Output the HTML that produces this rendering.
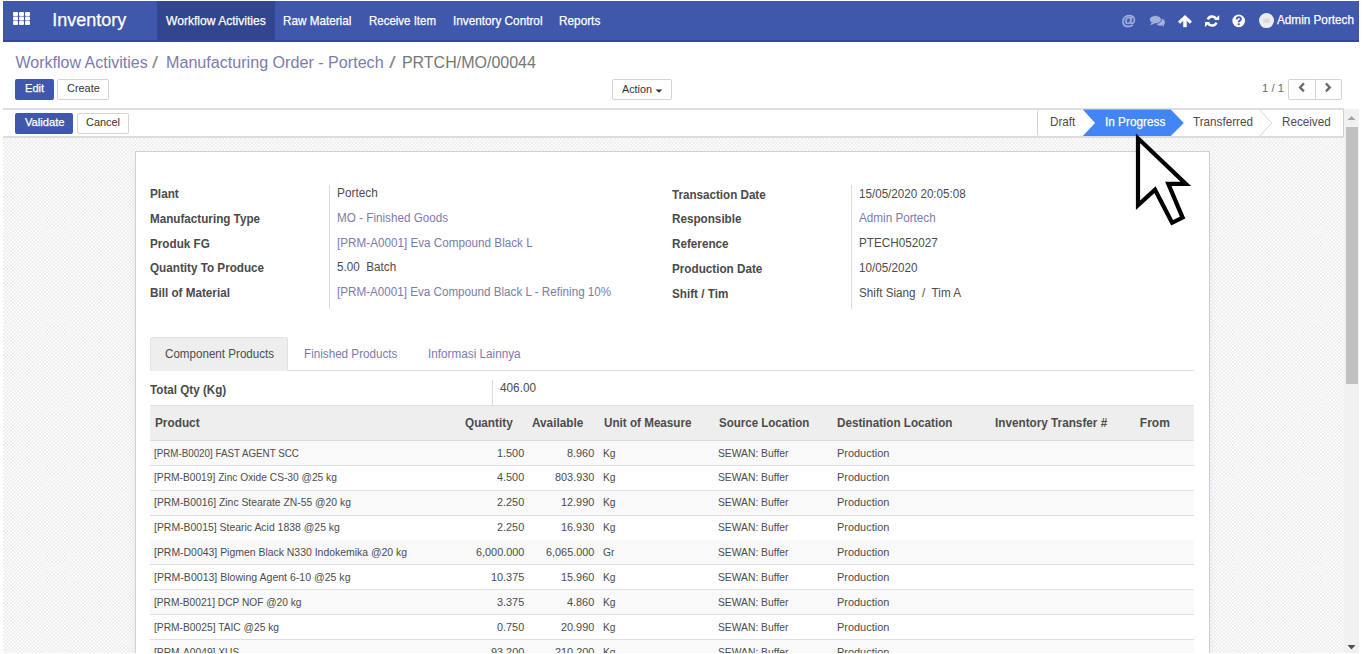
<!DOCTYPE html>
<html><head><meta charset="utf-8"><style>
html,body{margin:0;padding:0;width:1363px;height:654px;overflow:hidden;background:#fff;font-family:"Liberation Sans",sans-serif;}
.a{position:absolute;box-sizing:border-box}
.t{position:absolute;white-space:pre;line-height:1;transform-origin:0 0;font-family:"Liberation Sans",sans-serif}
</style></head><body>
<!-- navbar -->
<div class="a" style="left:3px;top:1px;width:1356.3px;height:41px;background:#3f58ac;border-bottom:2px solid #36479b"></div>
<div class="a" style="left:157px;top:1px;width:117.5px;height:39px;background:#32468f"></div>
<svg class="a" style="left:12px;top:11px" width="20" height="16" viewBox="0 0 20 16">
  <g fill="#fff">
    <rect x="1" y="1" width="5" height="4" rx="1"/><rect x="7" y="1" width="5" height="4" rx="1"/><rect x="13" y="1" width="5" height="4" rx="1"/>
    <rect x="1" y="5.5" width="5" height="4" rx="1"/><rect x="7" y="5.5" width="5" height="4" rx="1"/><rect x="13" y="5.5" width="5" height="4" rx="1"/>
    <rect x="1" y="10" width="5" height="4" rx="1"/><rect x="7" y="10" width="5" height="4" rx="1"/><rect x="13" y="10" width="5" height="4" rx="1"/>
  </g>
</svg>
<!-- right icons -->
<div class="a" style="left:1121.5px;top:13px;font-family:'Liberation Sans',sans-serif;font-weight:bold;font-size:14.5px;color:#a3afdc;line-height:14px;-webkit-text-stroke:0.45px #a3afdc">@</div>
<svg class="a" style="left:1120px;top:12px" width="160" height="18" viewBox="0 0 160 18">
  <!-- chat -->
  <g fill="#a3afdc">
    <ellipse cx="40.6" cy="10.2" rx="4.3" ry="3.5"/>
    <path d="M42.2 12.6 L43.8 15 L44 11.8Z"/>
  </g>
  <g fill="#a3afdc" stroke="#3f58ac" stroke-width="0.9">
    <ellipse cx="35.4" cy="7.6" rx="6" ry="4.1"/>
  </g>
  <path d="M31.6 10.4 L30.3 13.2 L35.2 11.3Z" fill="#a3afdc"/>
  <!-- up arrow -->
  <path fill="#fff" d="M65 3.2 L71.8 9.6 L69.8 11.6 L66.6 8.5 V15 H63.4 V8.5 L60.2 11.6 L58.2 9.6Z" stroke="#fff" stroke-width="0.4" stroke-linejoin="round"/>
  <!-- refresh -->
  <g fill="none" stroke="#fff" stroke-width="2.5">
    <path d="M87.78 7.43 A4.6 4.6 0 0 1 96.08 6.7"/>
    <path d="M96.42 10.57 A4.6 4.6 0 0 1 88.12 11.3"/>
  </g>
  <path fill="#fff" d="M99.2 3 V8 H94.2Z M85 15 V10 H90Z"/>
  <!-- question -->
  <circle cx="118.7" cy="8.9" r="6.3" fill="#fff"/>
  <path fill="none" stroke="#3f58ac" stroke-width="1.9" d="M116.6 7.3 Q116.8 5.1 118.8 5.1 Q120.9 5.2 120.9 7 Q120.9 8.2 119.5 8.8 Q118.7 9.2 118.7 10.3"/>
  <rect x="117.75" y="11.3" width="1.9" height="1.9" fill="#3f58ac"/>
  <!-- avatar -->
  <circle cx="146.5" cy="8.6" r="7.5" fill="#ececec"/>
  <rect x="143.5" y="6.5" width="6" height="4.5" fill="#d9d9d9"/>
</svg>

<!-- control panel -->
<div class="a" style="left:3px;top:42px;width:1357px;height:67px;background:#fff"></div>
<div class="a" style="left:15px;top:79px;width:38.5px;height:20.5px;background:#3f58ac;border-radius:2px"></div>
<div class="a" style="left:57px;top:79px;width:52px;height:20.5px;background:#fff;border:1px solid #d4d4d4;border-radius:2px"></div>
<div class="a" style="left:611.5px;top:79px;width:60.5px;height:20.5px;background:#fff;border:1px solid #d4d4d4;border-radius:2px"></div>
<svg class="a" style="left:654px;top:87.5px" width="10" height="6"><path d="M1.5 1.5 H8.3 L4.9 4.8Z" fill="#333"/></svg>
<div class="a" style="left:1288px;top:79px;width:28px;height:20.5px;background:#fff;border:1px solid #d4d4d4;border-radius:2px 0 0 2px"></div>
<div class="a" style="left:1315px;top:79px;width:26.5px;height:20.5px;background:#fff;border:1px solid #d4d4d4;border-radius:0 2px 2px 0"></div>
<svg class="a" style="left:1288px;top:79px" width="54" height="21">
  <path d="M15.9 4.4 L12 8.4 L15.9 12.4" fill="none" stroke="#6b6b6b" stroke-width="2.3" stroke-linecap="butt"/>
  <path d="M37.9 4.4 L41.8 8.4 L37.9 12.4" fill="none" stroke="#6b6b6b" stroke-width="2.3" stroke-linecap="butt"/>
</svg>
<!-- scroll content area -->
<div class="a" style="left:3px;top:108px;width:1341px;height:545px;background:repeating-conic-gradient(#ebebeb 0 25%,#ffffff 0 50%) 0 0/3.6px 3.6px;overflow:hidden">
  <div class="a" style="left:0;top:0;width:1341px;height:2px;background:#dfdfdf"></div>
  <div class="a" style="left:0;top:2px;width:1341px;height:26px;background:#fff"></div>
  <div class="a" style="left:0;top:28px;width:1341px;height:2px;background:#dcdcdc"></div>
</div>
<!-- validate / cancel -->
<div class="a" style="left:15px;top:113px;width:57.5px;height:20.5px;background:#3f58ac;border-radius:2px"></div>
<div class="a" style="left:76.5px;top:113px;width:52.5px;height:20.5px;background:#fff;border:1px solid #d4d4d4;border-radius:2px"></div>
<!-- statusbar -->
<div class="a" style="left:1037px;top:110px;width:307px;height:26px;background:#fff;border-left:1px solid #d0d0d0;border-right:1px solid #d0d0d0;border-radius:2px 0 0 2px"></div>
<svg class="a" style="left:1030px;top:108px" width="320" height="30" viewBox="0 0 320 30">
  <path d="M229.8 2 L241.7 15 L229.8 28" fill="none" stroke="#d3d3d3" stroke-width="1"/>
  <path d="M52.8 1.5 H140.8 L153.8 15 L140.8 28.1 H52.8 L65.1 15Z" fill="#4285f4"/>
</svg>

<!-- sheet -->
<div class="a" style="left:135px;top:151px;width:1075px;height:520px;background:#fff;border:1px solid #cfcfdd;box-shadow:0 4px 12px -8px rgba(0,0,0,.35)"></div>
<div class="a" style="left:328.8px;top:185px;width:1.3px;height:124px;background:#dcdcdc"></div>
<div class="a" style="left:851px;top:185px;width:1px;height:124px;background:#dcdcdc"></div>
<!-- tabs -->
<div class="a" style="left:150px;top:370px;width:1044px;height:1px;background:#dddddd"></div>
<div class="a" style="left:150px;top:336.5px;width:137.5px;height:34px;background:#eeeeee;border:1px solid #e2e2e2;border-bottom:none;border-radius:3px 3px 0 0"></div>
<div class="a" style="left:491.5px;top:380px;width:1px;height:25px;background:#dcdcdc"></div>
<!-- table -->
<div class="a" style="left:150px;top:404.5px;width:1044px;height:36.5px;background:#eeeeee;border-top:1px solid #e0e0e0;border-bottom:1px solid #dcdcdc"></div>
<div id="rows">
<div class="a" style="left:150px;top:441.0px;width:1044px;height:25px;background:#f9f9f9;border-bottom:1px solid #dedede"></div>
<div class="a" style="left:150px;top:465.86px;width:1044px;height:25px;background:#ffffff;border-bottom:1px solid #dedede"></div>
<div class="a" style="left:150px;top:490.72px;width:1044px;height:25px;background:#f9f9f9;border-bottom:1px solid #dedede"></div>
<div class="a" style="left:150px;top:515.58px;width:1044px;height:25px;background:#ffffff;border-bottom:1px solid #dedede"></div>
<div class="a" style="left:150px;top:540.44px;width:1044px;height:25px;background:#f9f9f9;border-bottom:1px solid #dedede"></div>
<div class="a" style="left:150px;top:565.3px;width:1044px;height:25px;background:#ffffff;border-bottom:1px solid #dedede"></div>
<div class="a" style="left:150px;top:590.16px;width:1044px;height:25px;background:#f9f9f9;border-bottom:1px solid #dedede"></div>
<div class="a" style="left:150px;top:615.02px;width:1044px;height:25px;background:#ffffff;border-bottom:1px solid #dedede"></div>
<div class="a" style="left:150px;top:639.88px;width:1044px;height:25px;background:#f9f9f9;border-bottom:1px solid #dedede"></div>
</div>
<span class=t style="left:52.30px;top:11.16px;font-size:18px;color:#fff;font-weight:normal;-webkit-text-stroke:0.25px #fff;">Inventory</span>
<span class=t style="left:166.20px;top:13.80px;font-size:13px;color:#fff;font-weight:normal;transform:scaleX(0.9292);-webkit-text-stroke:0.25px #fff;">Workflow Activities</span>
<span class=t style="left:283.00px;top:13.80px;font-size:13px;color:#fff;font-weight:normal;transform:scaleX(0.9004);-webkit-text-stroke:0.25px #fff;">Raw Material</span>
<span class=t style="left:368.50px;top:13.80px;font-size:13px;color:#fff;font-weight:normal;transform:scaleX(0.8830);-webkit-text-stroke:0.25px #fff;">Receive Item</span>
<span class=t style="left:452.80px;top:13.80px;font-size:13px;color:#fff;font-weight:normal;transform:scaleX(0.9040);-webkit-text-stroke:0.25px #fff;">Inventory Control</span>
<span class=t style="left:558.90px;top:13.80px;font-size:13px;color:#fff;font-weight:normal;transform:scaleX(0.9071);-webkit-text-stroke:0.25px #fff;">Reports</span>
<span class=t style="left:1276.60px;top:13.30px;font-size:13px;color:#fff;font-weight:normal;transform:scaleX(0.9031);-webkit-text-stroke:0.25px #fff;">Admin Portech</span>
<span class=t style="left:15.50px;top:55.36px;font-size:16px;color:#7c7bad;font-weight:normal;">Workflow Activities</span>
<span class=t style="left:151.50px;top:55.36px;font-size:16px;color:#8a8a8a;font-weight:normal;transform:scaleX(1.3474);">/</span>
<span class=t style="left:166.20px;top:55.36px;font-size:16px;color:#7c7bad;font-weight:normal;transform:scaleX(1.0070);">Manufacturing Order - Portech</span>
<span class=t style="left:388.70px;top:55.36px;font-size:16px;color:#8a8a8a;font-weight:normal;transform:scaleX(1.5270);">/</span>
<span class=t style="left:401.90px;top:55.36px;font-size:16px;color:#777;font-weight:normal;">PRTCH/MO/00044</span>
<span class=t style="left:25.20px;top:83.47px;font-size:11.5px;color:#fff;font-weight:normal;transform:scaleX(0.9633);-webkit-text-stroke:0.25px #fff;">Edit</span>
<span class=t style="left:66.70px;top:83.47px;font-size:11.5px;color:#333;font-weight:normal;transform:scaleX(0.9499);">Create</span>
<span class=t style="left:621.80px;top:83.57px;font-size:11.5px;color:#333;font-weight:normal;transform:scaleX(0.9384);">Action</span>
<span class=t style="left:1262.30px;top:83.47px;font-size:11.5px;color:#6a6a6a;font-weight:normal;transform:scaleX(0.9781);">1 / 1</span>
<span class=t style="left:24.50px;top:116.97px;font-size:11.5px;color:#fff;font-weight:normal;transform:scaleX(0.9701);-webkit-text-stroke:0.25px #fff;">Validate</span>
<span class=t style="left:86.00px;top:116.97px;font-size:11.5px;color:#333;font-weight:normal;transform:scaleX(0.9494);">Cancel</span>
<span class=t style="left:1050.40px;top:114.90px;font-size:13px;color:#4c4c4c;font-weight:normal;transform:scaleX(0.8981);">Draft</span>
<span class=t style="left:1104.60px;top:114.90px;font-size:13px;color:#fff;font-weight:normal;transform:scaleX(0.9070);-webkit-text-stroke:0.25px #fff;">In Progress</span>
<span class=t style="left:1193.00px;top:114.90px;font-size:13px;color:#4c4c4c;font-weight:normal;transform:scaleX(0.8993);">Transferred</span>
<span class=t style="left:1281.80px;top:114.90px;font-size:13px;color:#4c4c4c;font-weight:normal;transform:scaleX(0.8985);">Received</span>
<span class=t style="left:150.10px;top:188.24px;font-size:12px;color:#4a4a4a;font-weight:bold;transform:scaleX(0.9815);">Plant</span>
<span class=t style="left:337.00px;top:187.24px;font-size:12px;color:#4c4c4c;font-weight:normal;transform:scaleX(0.9841);">Portech</span>
<span class=t style="left:150.10px;top:212.94px;font-size:12px;color:#4a4a4a;font-weight:bold;transform:scaleX(0.9724);">Manufacturing Type</span>
<span class=t style="left:337.00px;top:211.94px;font-size:12px;color:#7c7bad;font-weight:normal;transform:scaleX(0.9747);">MO - Finished Goods</span>
<span class=t style="left:150.10px;top:237.54px;font-size:12px;color:#4a4a4a;font-weight:bold;transform:scaleX(0.9743);">Produk FG</span>
<span class=t style="left:337.00px;top:236.54px;font-size:12px;color:#7c7bad;font-weight:normal;transform:scaleX(0.9747);">[PRM-A0001] Eva Compound Black L</span>
<span class=t style="left:150.10px;top:262.24px;font-size:12px;color:#4a4a4a;font-weight:bold;transform:scaleX(0.9743);">Quantity To Produce</span>
<span class=t style="left:337.00px;top:261.24px;font-size:12px;color:#4c4c4c;font-weight:normal;transform:scaleX(0.9747);">5.00  Batch</span>
<span class=t style="left:150.10px;top:286.94px;font-size:12px;color:#4a4a4a;font-weight:bold;transform:scaleX(0.9743);">Bill of Material</span>
<span class=t style="left:337.00px;top:285.94px;font-size:12px;color:#7c7bad;font-weight:normal;transform:scaleX(0.9710);">[PRM-A0001] Eva Compound Black L - Refining 10%</span>
<span class=t style="left:671.70px;top:188.64px;font-size:12px;color:#4a4a4a;font-weight:bold;transform:scaleX(0.9689);">Transaction Date</span>
<span class=t style="left:859.00px;top:187.64px;font-size:12px;color:#4c4c4c;font-weight:normal;transform:scaleX(0.9690);">15/05/2020 20:05:08</span>
<span class=t style="left:671.70px;top:213.34px;font-size:12px;color:#4a4a4a;font-weight:bold;transform:scaleX(0.9743);">Responsible</span>
<span class=t style="left:859.00px;top:212.34px;font-size:12px;color:#7c7bad;font-weight:normal;transform:scaleX(0.9747);">Admin Portech</span>
<span class=t style="left:671.70px;top:238.04px;font-size:12px;color:#4a4a4a;font-weight:bold;transform:scaleX(0.9743);">Reference</span>
<span class=t style="left:859.00px;top:237.04px;font-size:12px;color:#4c4c4c;font-weight:normal;transform:scaleX(0.9747);">PTECH052027</span>
<span class=t style="left:671.70px;top:262.74px;font-size:12px;color:#4a4a4a;font-weight:bold;transform:scaleX(0.9743);">Production Date</span>
<span class=t style="left:859.00px;top:261.74px;font-size:12px;color:#4c4c4c;font-weight:normal;transform:scaleX(0.9747);">10/05/2020</span>
<span class=t style="left:671.70px;top:287.54px;font-size:12px;color:#4a4a4a;font-weight:bold;transform:scaleX(0.9743);">Shift / Tim</span>
<span class=t style="left:859.00px;top:286.54px;font-size:12px;color:#4c4c4c;font-weight:normal;transform:scaleX(0.9747);">Shift Siang  /  Tim A</span>
<span class=t style="left:164.80px;top:348.14px;font-size:12px;color:#4c4c4c;font-weight:normal;transform:scaleX(0.9678);">Component Products</span>
<span class=t style="left:304.40px;top:348.14px;font-size:12px;color:#7c7bad;font-weight:normal;transform:scaleX(0.9724);">Finished Products</span>
<span class=t style="left:427.60px;top:348.14px;font-size:12px;color:#7c7bad;font-weight:normal;transform:scaleX(0.9776);">Informasi Lainnya</span>
<span class=t style="left:150.00px;top:383.74px;font-size:12px;color:#4a4a4a;font-weight:bold;transform:scaleX(0.9715);">Total Qty (Kg)</span>
<span class=t style="left:499.50px;top:382.34px;font-size:12px;color:#4c4c4c;font-weight:normal;transform:scaleX(0.9808);">406.00</span>
<span class=t style="left:155.30px;top:416.74px;font-size:12px;color:#4c4c4c;font-weight:bold;transform:scaleX(0.9836);">Product</span>
<span class=t style="left:464.80px;top:416.74px;font-size:12px;color:#4c4c4c;font-weight:bold;transform:scaleX(0.9800);">Quantity</span>
<span class=t style="left:532.40px;top:416.74px;font-size:12px;color:#4c4c4c;font-weight:bold;transform:scaleX(0.9799);">Available</span>
<span class=t style="left:603.50px;top:416.74px;font-size:12px;color:#4c4c4c;font-weight:bold;transform:scaleX(0.9721);">Unit of Measure</span>
<span class=t style="left:718.70px;top:416.74px;font-size:12px;color:#4c4c4c;font-weight:bold;transform:scaleX(0.9605);">Source Location</span>
<span class=t style="left:837.10px;top:416.74px;font-size:12px;color:#4c4c4c;font-weight:bold;transform:scaleX(0.9724);">Destination Location</span>
<span class=t style="left:995.20px;top:416.74px;font-size:12px;color:#4c4c4c;font-weight:bold;transform:scaleX(0.9780);">Inventory Transfer #</span>
<span class=t style="left:1139.80px;top:416.74px;font-size:12px;color:#4c4c4c;font-weight:bold;">From</span>
<span class=t style="left:154.30px;top:447.57px;font-size:11.5px;color:#4c4c4c;font-weight:normal;transform:scaleX(0.8507);">[PRM-B0020] FAST AGENT SCC</span>
<span class=t style="left:497.08px;top:447.57px;font-size:11.5px;color:#4c4c4c;font-weight:normal;transform:scaleX(0.9458);">1.500</span>
<span class=t style="left:567.48px;top:447.57px;font-size:11.5px;color:#4c4c4c;font-weight:normal;transform:scaleX(0.9458);">8.960</span>
<span class=t style="left:602.90px;top:447.57px;font-size:11.5px;color:#4c4c4c;font-weight:normal;transform:scaleX(0.8956);">Kg</span>
<span class=t style="left:717.50px;top:447.57px;font-size:11.5px;color:#4c4c4c;font-weight:normal;transform:scaleX(0.8956);">SEWAN: Buffer</span>
<span class=t style="left:837.10px;top:447.57px;font-size:11.5px;color:#4c4c4c;font-weight:normal;transform:scaleX(0.9512);">Production</span>
<span class=t style="left:154.30px;top:472.49px;font-size:11.5px;color:#4c4c4c;font-weight:normal;transform:scaleX(0.8879);">[PRM-B0019] Zinc Oxide CS-30 @25 kg</span>
<span class=t style="left:497.08px;top:472.49px;font-size:11.5px;color:#4c4c4c;font-weight:normal;transform:scaleX(0.9458);">4.500</span>
<span class=t style="left:555.37px;top:472.49px;font-size:11.5px;color:#4c4c4c;font-weight:normal;transform:scaleX(0.9458);">803.930</span>
<span class=t style="left:602.90px;top:472.49px;font-size:11.5px;color:#4c4c4c;font-weight:normal;transform:scaleX(0.8956);">Kg</span>
<span class=t style="left:717.50px;top:472.49px;font-size:11.5px;color:#4c4c4c;font-weight:normal;transform:scaleX(0.8956);">SEWAN: Buffer</span>
<span class=t style="left:837.10px;top:472.49px;font-size:11.5px;color:#4c4c4c;font-weight:normal;transform:scaleX(0.9512);">Production</span>
<span class=t style="left:154.30px;top:497.41px;font-size:11.5px;color:#4c4c4c;font-weight:normal;transform:scaleX(0.9000);">[PRM-B0016] Zinc Stearate ZN-55 @20 kg</span>
<span class=t style="left:497.08px;top:497.41px;font-size:11.5px;color:#4c4c4c;font-weight:normal;transform:scaleX(0.9458);">2.250</span>
<span class=t style="left:561.42px;top:497.41px;font-size:11.5px;color:#4c4c4c;font-weight:normal;transform:scaleX(0.9458);">12.990</span>
<span class=t style="left:602.90px;top:497.41px;font-size:11.5px;color:#4c4c4c;font-weight:normal;transform:scaleX(0.8956);">Kg</span>
<span class=t style="left:717.50px;top:497.41px;font-size:11.5px;color:#4c4c4c;font-weight:normal;transform:scaleX(0.8956);">SEWAN: Buffer</span>
<span class=t style="left:837.10px;top:497.41px;font-size:11.5px;color:#4c4c4c;font-weight:normal;transform:scaleX(0.9512);">Production</span>
<span class=t style="left:154.30px;top:522.33px;font-size:11.5px;color:#4c4c4c;font-weight:normal;transform:scaleX(0.9080);">[PRM-B0015] Stearic Acid 1838 @25 kg</span>
<span class=t style="left:497.08px;top:522.33px;font-size:11.5px;color:#4c4c4c;font-weight:normal;transform:scaleX(0.9458);">2.250</span>
<span class=t style="left:561.42px;top:522.33px;font-size:11.5px;color:#4c4c4c;font-weight:normal;transform:scaleX(0.9458);">16.930</span>
<span class=t style="left:602.90px;top:522.33px;font-size:11.5px;color:#4c4c4c;font-weight:normal;transform:scaleX(0.8956);">Kg</span>
<span class=t style="left:717.50px;top:522.33px;font-size:11.5px;color:#4c4c4c;font-weight:normal;transform:scaleX(0.8956);">SEWAN: Buffer</span>
<span class=t style="left:837.10px;top:522.33px;font-size:11.5px;color:#4c4c4c;font-weight:normal;transform:scaleX(0.9512);">Production</span>
<span class=t style="left:154.30px;top:547.25px;font-size:11.5px;color:#4c4c4c;font-weight:normal;transform:scaleX(0.9076);">[PRM-D0043] Pigmen Black N330 Indokemika @20 kg</span>
<span class=t style="left:475.90px;top:547.25px;font-size:11.5px;color:#4c4c4c;font-weight:normal;transform:scaleX(0.9458);">6,000.000</span>
<span class=t style="left:546.30px;top:547.25px;font-size:11.5px;color:#4c4c4c;font-weight:normal;transform:scaleX(0.9458);">6,065.000</span>
<span class=t style="left:602.90px;top:547.25px;font-size:11.5px;color:#4c4c4c;font-weight:normal;transform:scaleX(0.8956);">Gr</span>
<span class=t style="left:717.50px;top:547.25px;font-size:11.5px;color:#4c4c4c;font-weight:normal;transform:scaleX(0.8956);">SEWAN: Buffer</span>
<span class=t style="left:837.10px;top:547.25px;font-size:11.5px;color:#4c4c4c;font-weight:normal;transform:scaleX(0.9512);">Production</span>
<span class=t style="left:154.30px;top:572.17px;font-size:11.5px;color:#4c4c4c;font-weight:normal;transform:scaleX(0.9168);">[PRM-B0013] Blowing Agent 6-10 @25 kg</span>
<span class=t style="left:491.02px;top:572.17px;font-size:11.5px;color:#4c4c4c;font-weight:normal;transform:scaleX(0.9458);">10.375</span>
<span class=t style="left:561.42px;top:572.17px;font-size:11.5px;color:#4c4c4c;font-weight:normal;transform:scaleX(0.9458);">15.960</span>
<span class=t style="left:602.90px;top:572.17px;font-size:11.5px;color:#4c4c4c;font-weight:normal;transform:scaleX(0.8956);">Kg</span>
<span class=t style="left:717.50px;top:572.17px;font-size:11.5px;color:#4c4c4c;font-weight:normal;transform:scaleX(0.8956);">SEWAN: Buffer</span>
<span class=t style="left:837.10px;top:572.17px;font-size:11.5px;color:#4c4c4c;font-weight:normal;transform:scaleX(0.9512);">Production</span>
<span class=t style="left:154.30px;top:597.09px;font-size:11.5px;color:#4c4c4c;font-weight:normal;transform:scaleX(0.8838);">[PRM-B0021] DCP NOF @20 kg</span>
<span class=t style="left:497.08px;top:597.09px;font-size:11.5px;color:#4c4c4c;font-weight:normal;transform:scaleX(0.9458);">3.375</span>
<span class=t style="left:567.48px;top:597.09px;font-size:11.5px;color:#4c4c4c;font-weight:normal;transform:scaleX(0.9458);">4.860</span>
<span class=t style="left:602.90px;top:597.09px;font-size:11.5px;color:#4c4c4c;font-weight:normal;transform:scaleX(0.8956);">Kg</span>
<span class=t style="left:717.50px;top:597.09px;font-size:11.5px;color:#4c4c4c;font-weight:normal;transform:scaleX(0.8956);">SEWAN: Buffer</span>
<span class=t style="left:837.10px;top:597.09px;font-size:11.5px;color:#4c4c4c;font-weight:normal;transform:scaleX(0.9512);">Production</span>
<span class=t style="left:154.30px;top:622.01px;font-size:11.5px;color:#4c4c4c;font-weight:normal;transform:scaleX(0.8906);">[PRM-B0025] TAIC @25 kg</span>
<span class=t style="left:497.08px;top:622.01px;font-size:11.5px;color:#4c4c4c;font-weight:normal;transform:scaleX(0.9458);">0.750</span>
<span class=t style="left:561.42px;top:622.01px;font-size:11.5px;color:#4c4c4c;font-weight:normal;transform:scaleX(0.9458);">20.990</span>
<span class=t style="left:602.90px;top:622.01px;font-size:11.5px;color:#4c4c4c;font-weight:normal;transform:scaleX(0.8956);">Kg</span>
<span class=t style="left:717.50px;top:622.01px;font-size:11.5px;color:#4c4c4c;font-weight:normal;transform:scaleX(0.8956);">SEWAN: Buffer</span>
<span class=t style="left:837.10px;top:622.01px;font-size:11.5px;color:#4c4c4c;font-weight:normal;transform:scaleX(0.9512);">Production</span>
<span class=t style="left:154.30px;top:646.93px;font-size:11.5px;color:#4c4c4c;font-weight:normal;transform:scaleX(0.8897);">[PRM-A0049] XUS</span>
<span class=t style="left:491.02px;top:646.93px;font-size:11.5px;color:#4c4c4c;font-weight:normal;transform:scaleX(0.9458);">93.200</span>
<span class=t style="left:555.37px;top:646.93px;font-size:11.5px;color:#4c4c4c;font-weight:normal;transform:scaleX(0.9458);">210.200</span>
<span class=t style="left:602.90px;top:646.93px;font-size:11.5px;color:#4c4c4c;font-weight:normal;transform:scaleX(0.8956);">Kg</span>
<span class=t style="left:717.50px;top:646.93px;font-size:11.5px;color:#4c4c4c;font-weight:normal;transform:scaleX(0.8956);">SEWAN: Buffer</span>
<span class=t style="left:837.10px;top:646.93px;font-size:11.5px;color:#4c4c4c;font-weight:normal;transform:scaleX(0.9512);">Production</span>
<!-- bottom white strip -->
<div class="a" style="left:0;top:653px;width:1363px;height:1px;background:#fff"></div>
<!-- scrollbar -->
<div class="a" style="left:1344px;top:109px;width:15px;height:544px;background:#f1f1f1"></div>
<div class="a" style="left:1346px;top:127px;width:12px;height:257px;background:#c1c1c1"></div>
<svg class="a" style="left:1344px;top:109px" width="15" height="544">
  <path d="M3.5 11 H11.5 L7.5 7Z" fill="#a3a3a3"/>
  <path d="M3.5 536 H11.5 L7.5 540.5Z" fill="#505050"/>
</svg>
<!-- cursor -->
<svg class="a" style="left:1120px;top:120px" width="80" height="120" viewBox="1120 120 80 120">
  <polygon points="1138,138.3 1138,205.3 1155,189.7 1172.1,222.8 1182.6,217.6 1168.3,183.9 1185.9,183.9" fill="#fff" stroke="#000" stroke-width="4.2" stroke-linejoin="miter"/>
</svg>


</body></html>
